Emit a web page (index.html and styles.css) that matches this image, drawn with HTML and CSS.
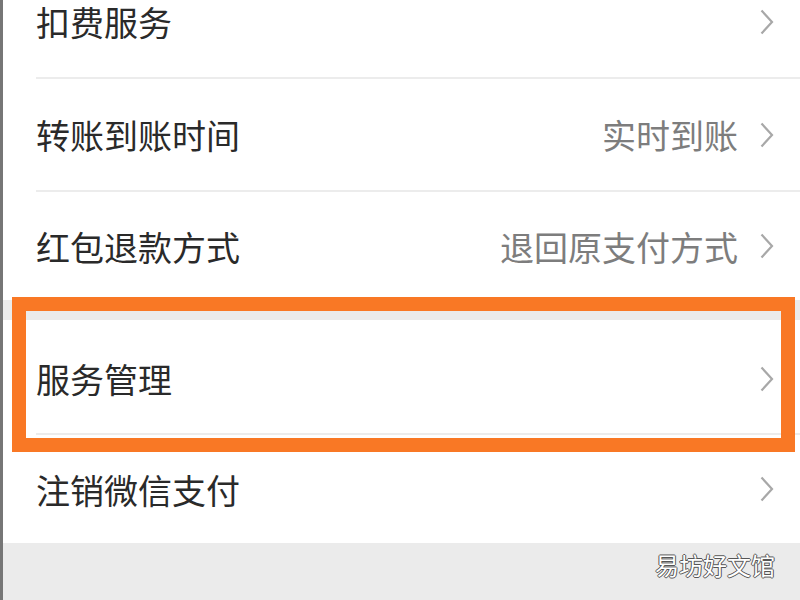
FILE: index.html
```html
<!DOCTYPE html>
<html lang="zh-CN">
<head>
  <meta charset="UTF-8">
  <title>支付设置</title>
  <link rel="stylesheet" href="styles.css">
</head>
<body>
  <div class="screen">
    <div class="group first">
      <div class="item">
        <span class="label">扣费服务</span>
        <svg class="arrow" width="14" height="26" viewBox="0 0 14 26"><polyline points="1.5,1.5 12,13 1.5,24.5"/></svg>
      </div>
      <div class="item">
        <span class="label">转账到账时间</span>
        <span class="value">实时到账</span>
        <svg class="arrow" width="14" height="26" viewBox="0 0 14 26"><polyline points="1.5,1.5 12,13 1.5,24.5"/></svg>
      </div>
      <div class="item last">
        <span class="label">红包退款方式</span>
        <span class="value">退回原支付方式</span>
        <svg class="arrow" width="14" height="26" viewBox="0 0 14 26"><polyline points="1.5,1.5 12,13 1.5,24.5"/></svg>
      </div>
    </div>

    <div class="group second">
      <div class="item">
        <span class="label">服务管理</span>
        <svg class="arrow" width="14" height="26" viewBox="0 0 14 26"><polyline points="1.5,1.5 12,13 1.5,24.5"/></svg>
      </div>
      <div class="item last">
        <span class="label">注销微信支付</span>
        <svg class="arrow" width="14" height="26" viewBox="0 0 14 26"><polyline points="1.5,1.5 12,13 1.5,24.5"/></svg>
      </div>
      <div class="highlight"></div>
    </div>

    <div class="footer">
      <span class="watermark">易坊好文馆</span>
    </div>
  </div>
</body>
</html>
```

FILE: styles.css
```css
body {
  margin: 0;
  background-color: #ffffff;
  font-family: "Noto Sans CJK SC", "Noto Sans", sans-serif;
  overflow: hidden;
}

.screen {
  width: 800px;
  height: 600px;
  border-left: 3px solid #767676;
  box-sizing: border-box;
  background-color: #ebebeb;
  overflow: hidden;
}

.group {
  position: relative;
  background-color: #ffffff;
}

.group.first {
  margin-top: -34px;
}

.group.second {
  margin-top: 20px;
}

.item {
  display: flex;
  align-items: center;
  height: 111px;
  margin-left: 33px;
  padding-right: 26px;
  border-bottom: 2px solid #ececec;
}

.item.last {
  border-bottom: none;
  height: 108px;
}

.label {
  flex: 1;
  font-size: 34px;
  color: #2a2a2a;
}

.value {
  font-size: 34px;
  color: #7d7d7d;
  margin-right: 22px;
}

.arrow {
  display: block;
}

.arrow polyline {
  fill: none;
  stroke: #a8a8a8;
  stroke-width: 2.2;
}

.group.second .item:first-child {
  padding-top: 4px;
  height: 109px;
}

.highlight {
  position: absolute;
  left: 9px;
  top: -23px;
  width: 783px;
  height: 155px;
  border: 14px solid #f97825;
  box-sizing: border-box;
}

.footer {
  display: flex;
  justify-content: flex-end;
  padding: 4px 25px 0 0;
}

.watermark {
  font-size: 24px;
  color: #ffffff;
  text-shadow: 1px 0 0 #555, -1px 0 0 #555, 0 1px 0 #555, 0 -1px 0 #555;
}
```
